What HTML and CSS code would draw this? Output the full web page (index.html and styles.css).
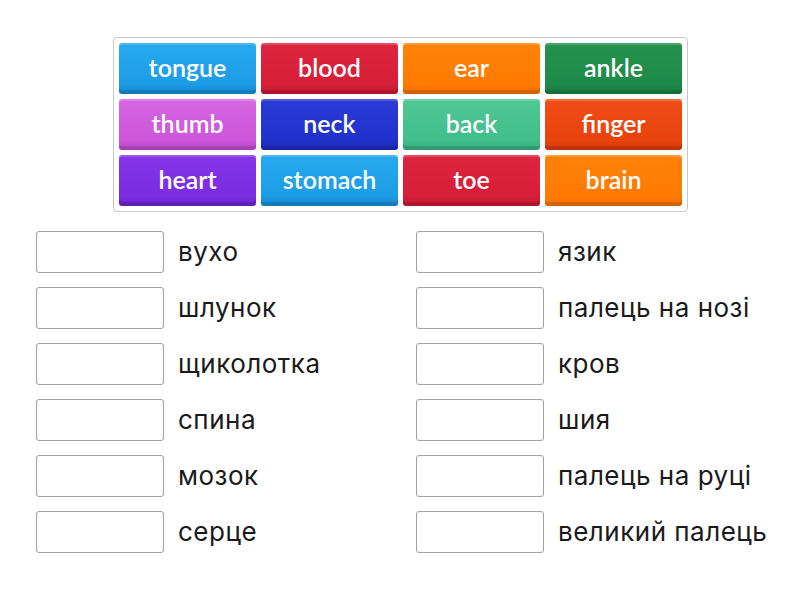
FILE: index.html
```html
<!DOCTYPE html>
<html>
<head>
<meta charset="utf-8">
<link rel="stylesheet" href="styles.css">
</head>
<body>
<div class="page">
  <div class="bank">
    <div class="tile c-blue">tongue</div>
    <div class="tile c-red">blood</div>
    <div class="tile c-orange">ear</div>
    <div class="tile c-green">ankle</div>
    <div class="tile c-pink">thumb</div>
    <div class="tile c-navy">neck</div>
    <div class="tile c-teal">back</div>
    <div class="tile c-vermil">finger</div>
    <div class="tile c-purple">heart</div>
    <div class="tile c-blue">stomach</div>
    <div class="tile c-red">toe</div>
    <div class="tile c-orange">brain</div>
  </div>
  <div class="list">
    <div class="item"><div class="slot"></div><span class="label">вухо</span></div>
    <div class="item"><div class="slot"></div><span class="label">язик</span></div>
    <div class="item"><div class="slot"></div><span class="label">шлунок</span></div>
    <div class="item"><div class="slot"></div><span class="label">палець на нозі</span></div>
    <div class="item"><div class="slot"></div><span class="label">щиколотка</span></div>
    <div class="item"><div class="slot"></div><span class="label">кров</span></div>
    <div class="item"><div class="slot"></div><span class="label">спина</span></div>
    <div class="item"><div class="slot"></div><span class="label">шия</span></div>
    <div class="item"><div class="slot"></div><span class="label">мозок</span></div>
    <div class="item"><div class="slot"></div><span class="label">палець на руці</span></div>
    <div class="item"><div class="slot"></div><span class="label">серце</span></div>
    <div class="item"><div class="slot"></div><span class="label">великий палець</span></div>
  </div>
</div>
</body>
</html>
```

FILE: styles.css
```css
html, body {
  margin: 0;
  padding: 0;
  background: #ffffff;
}
.page {
  padding-top: 37px;
}
.bank {
  margin-left: 113px;
  width: 563px;
  padding: 5px;
  border: 1px solid #c8c8c8;
  border-radius: 4px;
  display: grid;
  grid-template-columns: repeat(4, 137px);
  grid-auto-rows: 51px;
  gap: 5px;
}
.tile {
  border-radius: 3px;
  color: #ffffff;
  font-family: Lato, "Open Sans", sans-serif;
  font-weight: 600;
  font-size: 25px;
  display: flex;
  align-items: center;
  justify-content: center;
  padding-bottom: 4px;
  box-sizing: border-box;
  box-shadow: inset 0 -4px 0 rgba(0,0,0,0.12), inset 0 2px 0 rgba(255,255,255,0.18);
}
.c-blue { background: linear-gradient(#27a9f0, #1c9de6 80%, #1689d2); }
.c-red { background: linear-gradient(#de2540, #d61e37 80%, #c31830); }
.c-orange { background: linear-gradient(#ff8208, #ff7b00 80%, #ef6f00); }
.c-green { background: linear-gradient(#25924f, #1e8a49 80%, #187b40); }
.c-pink { background: linear-gradient(#d766e4, #cc56d9 80%, #ba48c9); }
.c-navy { background: linear-gradient(#2a3bd6, #2131cb 80%, #1b28b6); }
.c-teal { background: linear-gradient(#4fc896, #40be8b 80%, #36ad7d); }
.c-vermil { background: linear-gradient(#f24d16, #e8430d 80%, #d53a08); }
.c-purple { background: linear-gradient(#8535e6, #7b2ce0 80%, #6c22cc); }
.list {
  margin-top: 19px;
  margin-left: 36px;
  display: grid;
  grid-template-columns: 380px 380px;
  row-gap: 14px;
}
.item {
  display: flex;
  align-items: center;
  gap: 14px;
}
.slot {
  width: 128px;
  height: 42px;
  box-sizing: border-box;
  border: 1px solid #a0a0a0;
  border-radius: 3px;
  background: #ffffff;
  flex: none;
}
.label {
  font-family: Inter, "Noto Sans", sans-serif;
  font-size: 26px;
  letter-spacing: 0.5px;
  color: #1a1a1a;
  padding-bottom: 2px;
}
```
